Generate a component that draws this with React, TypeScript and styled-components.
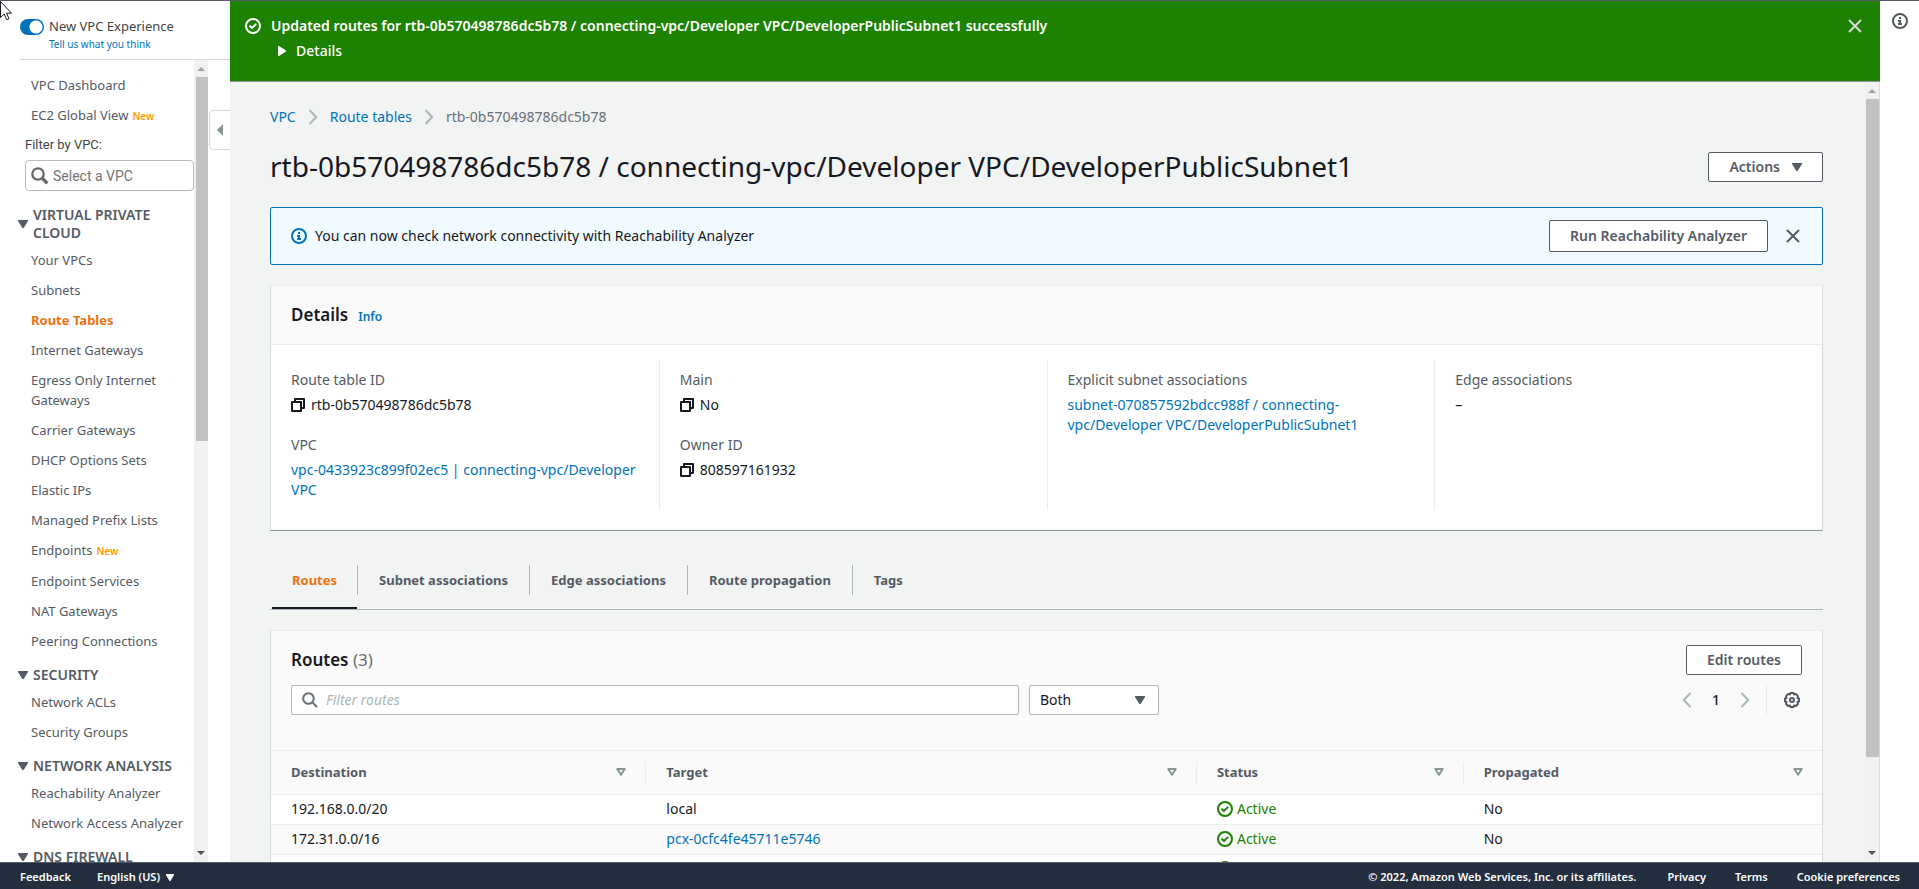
import React from 'react';
import styled, { createGlobalStyle, css } from 'styled-components';

const c = {
  ink: '#16191f',
  text: '#545b64',
  muted: '#687078',
  link: '#0073bb',
  orange: '#ec7211',
  green: '#1d8102',
  line: '#eaeded',
  edge: '#aab7b8',
  page: '#f2f3f3',
};

const Global = createGlobalStyle`
  *, *::before, *::after { box-sizing: border-box; }
  body { margin: 0; background: #fff; }
  body, button, input, select { font-family: "Noto Sans", "Open Sans", sans-serif; font-size: 14px; line-height: 20px; color: ${c.ink}; }
  a { color: ${c.link}; text-decoration: none; }
  h1, h2, h3, p, ul, ol, dl, dd { margin: 0; padding: 0; }
  ul, ol { list-style: none; }
  button { background: none; border: 0; padding: 0; cursor: pointer; }
  svg { display: block; flex: none; }
`;

/* ---------- icons ---------- */

const CheckCircle = ({ color }: { color: string }) => (
  <svg width="16" height="16" viewBox="0 0 16 16" fill="none" stroke={color} strokeWidth="2" aria-hidden="true">
    <circle cx="8" cy="8" r="7" />
    <path d="M4.5 7.800 7 10l4.200-4.100" />
  </svg>
);

const InfoCircle = ({ color }: { color: string }) => (
  <svg width="16" height="16" viewBox="0 0 16 16" fill="none" stroke={color} strokeWidth="2" aria-hidden="true">
    <circle cx="8" cy="8" r="7" />
    <path d="M7 5h2M6 8h3M8 8v3M6 11h4" strokeWidth="1.800" />
  </svg>
);

const CloseIcon = ({ color }: { color: string }) => (
  <svg width="16" height="16" viewBox="0 0 16 16" fill="none" stroke={color} strokeWidth="2" aria-hidden="true">
    <path d="m2 2 12 12M14 2 2 14" />
  </svg>
);

const CopyIcon = () => (
  <svg width="14" height="14" viewBox="0 0 14 14" fill="none" stroke={c.ink} strokeWidth="2" strokeLinejoin="round" aria-hidden="true">
    <path d="M1 4h9v9H1z" />
    <path d="M4 4V1h9v9h-3" />
  </svg>
);

const Chevron = ({ flip }: { flip?: boolean }) => (
  <svg width="10" height="16" viewBox="0 0 10 16" fill="none" stroke={c.edge} strokeWidth="2" aria-hidden="true">
    <path d={flip ? 'M8.500 1 1.800 8l6.700 7' : 'M1.500 1l6.700 7-6.700 7'} />
  </svg>
);

const Down = ({ color, w = 10, h = 8 }: { color: string; w?: number; h?: number }) => (
  <svg width={w} height={h} viewBox="0 0 10 8" preserveAspectRatio="none" aria-hidden="true">
    <path d="M0 0h10v1L5.600 8H4.400L0 1z" fill={color} />
  </svg>
);

const SortIcon = () => (
  <svg width="10" height="8" viewBox="0 0 10 8" fill="none" stroke="#879596" strokeWidth="2" strokeLinejoin="round" aria-hidden="true">
    <path d="M1.300 1h7.400L5 6.800z" />
  </svg>
);

const SearchIcon = () => (
  <svg width="16" height="16" viewBox="0 0 16 16" fill="none" stroke={c.muted} strokeWidth="2" aria-hidden="true">
    <circle cx="6.500" cy="6.500" r="5.300" />
    <path d="m10.400 10.400 4.600 4.600" />
  </svg>
);

const BoldSearchIcon = () => (
  <svg width="18" height="18" viewBox="0 0 18 18" fill="none" stroke="#666" aria-hidden="true">
    <circle cx="7" cy="7" r="5.700" strokeWidth="2.200" />
    <path d="m11.500 11.500 4.800 4.800" strokeWidth="3.200" />
  </svg>
);

const GearIcon = () => (
  <svg width="16" height="16" viewBox="0 0 16 16" fill="none" stroke={c.text} strokeWidth="2" strokeLinejoin="round" aria-hidden="true">
    <path d="M6.500 1h3l.5 1.500 2-.4 2 2-.6 1.900L15 6.500v3l-1.600.5.6 2-2 2-2-.5-.5 1.500h-3L6 13.500l-2 .5-2-2 .6-2L1 9.500v-3L2.600 6 2 4.100l2-2 2 .4z" />
    <circle cx="8" cy="8" r="2" />
  </svg>
);

/* ---------- frame ---------- */

const Shell = styled.div`
  display: flex;
  flex-direction: column;
  height: 100vh;
  border-top: 1px solid ${c.text};
`;

const Columns = styled.div`
  display: flex;
  flex: 1;
  min-height: 0;
`;

const Pointer = styled.svg`
  position: absolute;
  left: 0;
  top: 0;
  z-index: 5;
`;

const Track = styled.div<{ $width: number }>`
  display: flex;
  flex-direction: column;
  align-items: center;
  flex: none;
  width: ${(p) => p.$width}px;
  padding: 7px 0;
  background: #f1f1f1;
`;

const Thumb = styled.div<{ $share: number }>`
  width: 100%;
  flex: ${(p) => p.$share} 0 0;
  margin: 6px 0 0;
  border: solid #f1f1f1;
  border-width: 0 0 0 2px;
  background: #c1c1c1;
`;

const Rest = styled.div<{ $share: number }>`
  flex: ${(p) => p.$share} 0 0;
`;

const Scrollbar = ({ width, share }: { width: number; share: number }) => (
  <Track $width={width} aria-hidden="true">
    <svg width="8" height="4" viewBox="0 0 8 4"><path d="M0 4l4-4 4 4z" fill="#a3a3a3" /></svg>
    <Thumb $share={share} />
    <Rest $share={1000 - share} />
    <svg width="8" height="4" viewBox="0 0 8 4"><path d="M0 0l4 4 4-4z" fill="#505050" /></svg>
  </Track>
);

/* ---------- side navigation ---------- */

const Side = styled.aside`
  display: flex;
  flex-direction: column;
  flex: none;
  width: 230px;
`;

const Experience = styled.div`
  display: grid;
  grid-template-columns: 24px 1fr;
  column-gap: 5px;
  margin-left: 20px;
  padding: 15px 0 7px;
  height: 59px;
  border-bottom: 1px solid #d5dbdb;
  font-size: 13px;
  color: #444;

  a { grid-column: 2; font-size: 10px; line-height: 14px; }
`;

const Toggle = styled.input`
  appearance: none;
  width: 24px;
  height: 16px;
  margin: 3px 0 0;
  border-radius: 8px;
  background: radial-gradient(circle at 16px 8px, #fff 6px, ${c.link} 7px);
`;

const SideBody = styled.div`
  display: flex;
  flex: 1;
  min-height: 0;
`;

const Nav = styled.nav`
  flex: 1;
  min-width: 0;
  padding-top: 10px;
  overflow: hidden;
  font-size: 13px;
`;

const NavItem = styled.li<{ $active?: boolean }>`
  padding: 5px 0 5px 31px;

  a { color: ${c.text}; }
  ${(p) => p.$active && css`a { color: ${c.orange}; font-weight: 700; }`}
`;

const NewBadge = styled.span`
  margin-left: 4px;
  font-size: 10px;
  font-weight: 600;
  color: #ff9900;
`;

const NavHeading = styled.h3`
  display: flex;
  align-items: center;
  gap: 5px;
  padding: 10px 12px 3px 18px;
  font-size: 14px;
  font-weight: 600;
  line-height: 18px;
  color: ${c.text};
`;

const VpcFilter = styled.div`
  display: flex;
  flex-direction: column;
  padding: 4px 0 5px 25px;
  gap: 5px;

  label, input { font-family: Roboto, sans-serif; color: #444; }
`;

const VpcBox = styled.div`
  display: flex;
  align-items: center;
  gap: 4px;
  height: 31px;
  padding: 0 5px;
  border: 1px solid #bbb;
  border-radius: 4px;

  input { flex: 1; min-width: 0; border: 0; padding: 0; background: none; outline: 0; }
  input::placeholder { color: #757575; }
`;

const Gutter = styled.div`
  flex: none;
  width: 22px;
  padding: 50px 0 0 1px;
`;

const Collapse = styled.button`
  display: grid;
  place-items: center;
  width: 21px;
  height: 40px;
  border: 1px solid #d5dbdb;
  border-right: 0;
  border-radius: 5px 0 0 5px;
`;

type Entry = { label: string; isNew?: boolean; active?: boolean };

const topEntries: Entry[] = [{ label: 'VPC Dashboard' }, { label: 'EC2 Global View', isNew: true }];

const sections: { title: string; entries: Entry[] }[] = [
  {
    title: 'VIRTUAL PRIVATE CLOUD',
    entries: [
      { label: 'Your VPCs' },
      { label: 'Subnets' },
      { label: 'Route Tables', active: true },
      { label: 'Internet Gateways' },
      { label: 'Egress Only Internet Gateways' },
      { label: 'Carrier Gateways' },
      { label: 'DHCP Options Sets' },
      { label: 'Elastic IPs' },
      { label: 'Managed Prefix Lists' },
      { label: 'Endpoints', isNew: true },
      { label: 'Endpoint Services' },
      { label: 'NAT Gateways' },
      { label: 'Peering Connections' },
    ],
  },
  { title: 'SECURITY', entries: [{ label: 'Network ACLs' }, { label: 'Security Groups' }] },
  { title: 'NETWORK ANALYSIS', entries: [{ label: 'Reachability Analyzer' }, { label: 'Network Access Analyzer' }] },
  { title: 'DNS FIREWALL', entries: [] },
];

const NavList = ({ entries }: { entries: Entry[] }) => (
  <ul>
    {entries.map((e) => (
      <NavItem key={e.label} $active={e.active}>
        <a href="#">{e.label}</a>
        {e.isNew && <NewBadge>New</NewBadge>}
      </NavItem>
    ))}
  </ul>
);

const SideNav = () => (
  <Side>
    <Experience>
      <Toggle type="checkbox" role="switch" id="new-experience" defaultChecked />
      <label htmlFor="new-experience">New VPC Experience</label>
      <a href="#">Tell us what you think</a>
    </Experience>
    <SideBody>
      <Nav>
        <NavList entries={topEntries} />
        <VpcFilter>
          <label htmlFor="vpc-filter">Filter by VPC:</label>
          <VpcBox>
            <BoldSearchIcon />
            <input id="vpc-filter" placeholder="Select a VPC" />
          </VpcBox>
        </VpcFilter>
        {sections.map((s) => (
          <section key={s.title}>
            <NavHeading>
              <Down color={c.text} />
              {s.title}
            </NavHeading>
            <NavList entries={s.entries} />
          </section>
        ))}
      </Nav>
      <Scrollbar width={14} share={470} />
      <Gutter>
        <Collapse aria-label="Collapse navigation">
          <svg width="6" height="12" viewBox="0 0 6 12"><path d="M6 0v12L0 6z" fill="#879596" /></svg>
        </Collapse>
      </Gutter>
    </SideBody>
  </Side>
);

/* ---------- main column ---------- */

const Main = styled.main`
  display: flex;
  flex-direction: column;
  flex: 1;
  min-width: 0;
`;

const Banner = styled.div`
  display: flex;
  align-items: flex-start;
  gap: 10px;
  height: 81px;
  padding: 15px 17px 0 15px;
  background: ${c.green};
  border-bottom: 1px solid #879596;
  color: #fff;

  > svg, > button { margin-top: 2px; }
`;

const BannerText = styled.div`
  flex: 1;

  p { font-weight: 600; }
`;

const DetailsToggle = styled.button`
  display: flex;
  align-items: center;
  gap: 10px;
  margin: 5px 0 0 7px;
  font-weight: 500;
  color: #fff;
`;

const MainBody = styled.div`
  display: flex;
  flex: 1;
  min-height: 0;
  border-right: 1px solid #d5dbdb;
  background: ${c.page};
`;

const Content = styled.div`
  flex: 1;
  min-width: 0;
  overflow: hidden;
  padding: 25px 41px 0 40px;
`;

const Crumbs = styled.ol`
  display: flex;
  color: ${c.muted};

  li { display: flex; align-items: center; }
  svg { margin: 0 12px; }
`;

const TitleRow = styled.div`
  display: flex;
  align-items: center;
  justify-content: space-between;
  height: 30px;
  margin: 25px 0;

  h1 { padding-bottom: 2px; font-size: 28px; line-height: 32px; font-weight: 400; }
`;

const Button = styled.button<{ $tall?: boolean }>`
  display: inline-flex;
  align-items: center;
  justify-content: center;
  gap: 12px;
  height: ${(p) => (p.$tall ? 32 : 30)}px;
  padding: 0 20px;
  border: 1px solid ${c.text};
  border-radius: 2px;
  background: #fff;
  font-weight: 600;
  color: ${c.text};
`;

const Notice = styled.div`
  display: flex;
  align-items: center;
  gap: 8px;
  height: 58px;
  margin-bottom: 20px;
  padding: 0 21px 0 20px;
  border: 1px solid ${c.link};
  border-radius: 2px;
  background: #f1faff;

  p { flex: 1; }
  ${Button} { margin-right: 9px; }
`;

const Panel = styled.section`
  border: 1px solid #d5dbdb;
  border-top-color: ${c.line};
  border-bottom-color: #879596;
  background: #fff;
`;

const PanelHead = styled.header`
  display: flex;
  align-items: baseline;
  gap: 10px;
  height: 59px;
  padding: 19px 20px 0;
  background: #fafafa;
  border-bottom: 1px solid ${c.line};

  a { font-size: 12px; font-weight: 600; }
`;

const PanelTitle = styled.h2`
  font-size: 17px;
  line-height: 20px;
  font-weight: 600;

  span { font-weight: 400; color: ${c.muted}; }
`;

const Facts = styled.div`
  display: grid;
  grid-template-columns: repeat(4, 1fr);
  padding: 15px 0 20px;
`;

const FactColumn = styled.dl`
  display: flex;
  flex-direction: column;
  gap: 20px;
  padding: 10px 20px;

  &:not(:first-child) { border-left: 1px solid ${c.line}; }
  dt { color: ${c.text}; margin-bottom: 5px; }
  dd { display: flex; align-items: center; gap: 6px; }
`;

const Tabs = styled.div`
  display: flex;
  margin: 20px 0;
  padding-left: 2px;
  border-bottom: 1px solid ${c.edge};
`;

const Tab = styled.button<{ $active?: boolean }>`
  padding: 14px 0 12px;
  border-bottom: 2px solid ${(p) => (p.$active ? c.ink : 'transparent')};
  font-size: 13px;
  font-weight: 700;
  color: ${(p) => (p.$active ? c.orange : c.text)};

  span { display: block; padding: 0 20px; line-height: 30px; }
  &:not(:first-child) span { border-left: 1px solid ${c.edge}; padding: 0 21px; }
`;

const RoutesHead = styled.header`
  display: flex;
  flex-direction: column;
  gap: 10px;
  padding: 14px 20px 35px;
  background: #fafafa;
  border-bottom: 1px solid ${c.line};
`;

const Row = styled.div`
  display: flex;
  align-items: center;
  justify-content: space-between;
  height: 30px;
`;

const Filters = styled.div`
  display: flex;
  gap: 10px;
  flex: 0 1 868px;
`;

const Field = styled.div<{ $grow?: boolean }>`
  position: relative;
  display: flex;
  align-items: center;
  flex: ${(p) => (p.$grow ? '1' : '0 0 130px')};
  height: 30px;
  padding: 0 10px;
  gap: 8px;
  border: 1px solid ${c.edge};
  border-radius: 2px;
  background: #fff;

  input, select { flex: 1; min-width: 0; border: 0; padding: 0; margin: 0; outline: 0; background: none; appearance: none; }
  input::placeholder { color: ${c.edge}; font-style: italic; }
  svg { pointer-events: none; }
  select + svg { margin-right: 3px; }
`;

const Pager = styled.div`
  display: flex;
  align-items: center;

  > b { width: 48px; text-align: center; font-weight: 500; }
`;

const Gear = styled.button`
  display: grid;
  place-items: center;
  height: 30px;
  margin-left: 16px;
  padding: 0 2px 0 17px;
  border-left: 1px solid ${c.line};
`;

const RouteTable = styled.table`
  width: 100%;
  table-layout: fixed;
  border-collapse: collapse;

  th, td { padding: 0; text-align: left; border-bottom: 1px solid ${c.line}; }
  th { height: 43px; background: #fafafa; color: ${c.text}; font-size: 13px; font-weight: 700; }
  td { height: 30px; padding: 0 20px; }
  tbody tr:nth-child(even) { background: #fafafa; }
`;

const HeadCell = styled.div`
  display: flex;
  align-items: center;
  justify-content: space-between;
  height: 21px;
  padding: 0 19px 0 20px;

  th:not(:last-child) > & { border-right: 1px solid ${c.line}; }
`;

const Status = styled.span`
  display: flex;
  align-items: center;
  gap: 4px;
  color: ${c.green};
`;

const Rail = styled.aside`
  flex: none;
  width: 39px;
  padding: 12px 0 0 12px;
`;

const Footer = styled.footer`
  display: flex;
  align-items: center;
  flex: none;
  height: 27px;
  padding: 2px 19px 0 20px;
  border-top: 1px solid ${c.text};
  background: #232f3e;
  font-size: 11px;
  font-weight: 600;
  color: #fff;

  a, button { color: #fff; font-size: 11px; font-weight: 600; }
  a + a { margin-left: 29px; }
  button { display: flex; align-items: center; gap: 6px; margin-left: 26px; }
  p { margin: 0 31px 0 auto; }
`;

const tabs = ['Routes', 'Subnet associations', 'Edge associations', 'Route propagation', 'Tags'];

const columns = [
  { name: 'Destination', width: '24.2%' },
  { name: 'Target', width: '35.5%' },
  { name: 'Status', width: '17.2%' },
  { name: 'Propagated', width: '23.1%' },
];

const Copied = ({ children }: { children: string }) => (
  <dd>
    <CopyIcon />
    {children}
  </dd>
);

export default function App() {
  return (
    <>
      <Global />
      <Shell>
        <Columns>
          <SideNav />
          <Main>
            <Banner role="status">
              <CheckCircle color="#fff" />
              <BannerText>
                <p>Updated routes for rtb-0b570498786dc5b78 / connecting-vpc/Developer VPC/DeveloperPublicSubnet1 successfully</p>
                <DetailsToggle>
                  <svg width="8" height="10" viewBox="0 0 8 10"><path d="M0 0h1l7 4.500v1L1 10H0z" fill="#fff" /></svg>
                  Details
                </DetailsToggle>
              </BannerText>
              <button aria-label="Dismiss"><CloseIcon color="#d5dbdb" /></button>
            </Banner>
            <MainBody>
              <Content>
                <Crumbs>
                  <li><a href="#">VPC</a><Chevron /></li>
                  <li><a href="#">Route tables</a><Chevron /></li>
                  <li>rtb-0b570498786dc5b78</li>
                </Crumbs>
                <TitleRow>
                  <h1>rtb-0b570498786dc5b78 / connecting-vpc/Developer VPC/DeveloperPublicSubnet1</h1>
                  <Button>Actions <Down color={c.text} /></Button>
                </TitleRow>
                <Notice>
                  <InfoCircle color={c.link} />
                  <p>You can now check network connectivity with Reachability Analyzer</p>
                  <Button $tall>Run Reachability Analyzer</Button>
                  <button aria-label="Close"><CloseIcon color={c.text} /></button>
                </Notice>
                <Panel>
                  <PanelHead>
                    <PanelTitle>Details</PanelTitle>
                    <a href="#">Info</a>
                  </PanelHead>
                  <Facts>
                    <FactColumn>
                      <div><dt>Route table ID</dt><Copied>rtb-0b570498786dc5b78</Copied></div>
                      <div><dt>VPC</dt><dd><a href="#">vpc-0433923c899f02ec5 | connecting-vpc/Developer VPC</a></dd></div>
                    </FactColumn>
                    <FactColumn>
                      <div><dt>Main</dt><Copied>No</Copied></div>
                      <div><dt>Owner ID</dt><Copied>808597161932</Copied></div>
                    </FactColumn>
                    <FactColumn>
                      <div>
                        <dt>Explicit subnet associations</dt>
                        <dd><a href="#">subnet-070857592bdcc988f / connecting-vpc/Developer VPC/DeveloperPublicSubnet1</a></dd>
                      </div>
                    </FactColumn>
                    <FactColumn>
                      <div><dt>Edge associations</dt><dd>–</dd></div>
                    </FactColumn>
                  </Facts>
                </Panel>
                <Tabs role="tablist">
                  {tabs.map((t, i) => (
                    <Tab key={t} role="tab" aria-selected={i === 0} $active={i === 0}><span>{t}</span></Tab>
                  ))}
                </Tabs>
                <Panel>
                  <RoutesHead>
                    <Row>
                      <PanelTitle>Routes <span>(3)</span></PanelTitle>
                      <Button>Edit routes</Button>
                    </Row>
                    <Row>
                      <Filters>
                        <Field $grow>
                          <SearchIcon />
                          <input aria-label="Filter routes" placeholder="Filter routes" />
                        </Field>
                        <Field>
                          <select aria-label="Route type" defaultValue="Both"><option>Both</option></select>
                          <Down color={c.text} />
                        </Field>
                      </Filters>
                      <Pager>
                        <button aria-label="Previous page"><Chevron flip /></button>
                        <b>1</b>
                        <button aria-label="Next page"><Chevron /></button>
                        <Gear aria-label="Preferences"><GearIcon /></Gear>
                      </Pager>
                    </Row>
                  </RoutesHead>
                  <RouteTable>
                    <colgroup>{columns.map((k) => <col key={k.name} style={{ width: k.width }} />)}</colgroup>
                    <thead>
                      <tr>
                        {columns.map((k) => (
                          <th key={k.name} scope="col">
                            <HeadCell>
                              {k.name}
                              <button aria-label={`Sort by ${k.name}`}><SortIcon /></button>
                            </HeadCell>
                          </th>
                        ))}
                      </tr>
                    </thead>
                    <tbody>
                      <tr>
                        <td>192.168.0.0/20</td>
                        <td>local</td>
                        <td><Status><CheckCircle color={c.green} />Active</Status></td>
                        <td>No</td>
                      </tr>
                      <tr>
                        <td>172.31.0.0/16</td>
                        <td><a href="#">pcx-0cfc4fe45711e5746</a></td>
                        <td><Status><CheckCircle color={c.green} />Active</Status></td>
                        <td>No</td>
                      </tr>
                      <tr>
                        <td />
                        <td />
                        <td><Status><CheckCircle color={c.green} /></Status></td>
                        <td />
                      </tr>
                    </tbody>
                  </RouteTable>
                </Panel>
              </Content>
              <Scrollbar width={15} share={875} />
            </MainBody>
          </Main>
          <Rail>
            <button aria-label="Open help panel"><InfoCircle color={c.text} /></button>
          </Rail>
        </Columns>
        <Footer>
          <a href="#">Feedback</a>
          <button>English (US) <Down color="#fff" w={8} h={7} /></button>
          <p>© 2022, Amazon Web Services, Inc. or its affiliates.</p>
          <a href="#">Privacy</a>
          <a href="#">Terms</a>
          <a href="#">Cookie preferences</a>
        </Footer>
      </Shell>
      <Pointer width="13" height="21" viewBox="0 0 13 21" aria-hidden="true">
        <path d="M.5 1.500v16l3.700-3.500 2.500 5.700 2.300-1-2.500-5.500h5z" fill="#fff" stroke="#16191f" />
      </Pointer>
    </>
  );
}
